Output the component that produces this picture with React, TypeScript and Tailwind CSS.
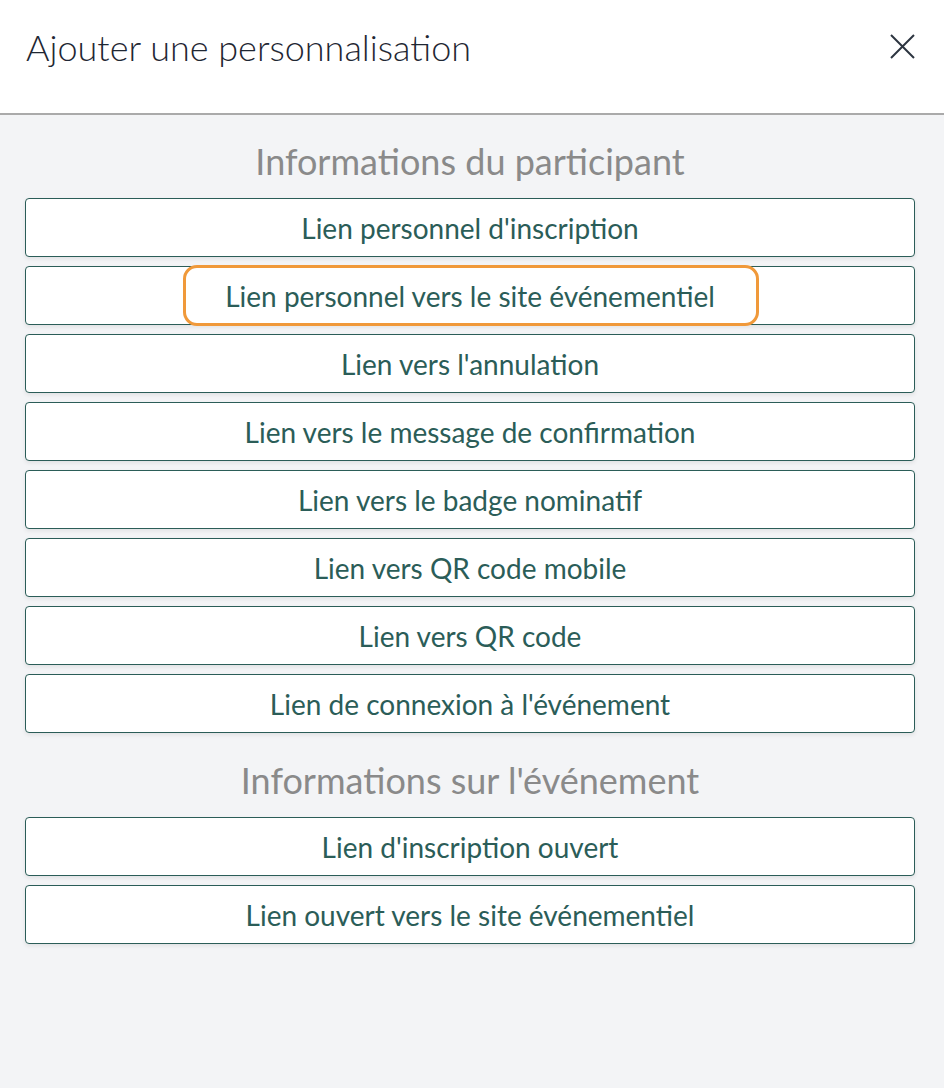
const participantLinks = [
  "Lien personnel d'inscription",
  'Lien personnel vers le site événementiel',
  "Lien vers l'annulation",
  'Lien vers le message de confirmation',
  'Lien vers le badge nominatif',
  'Lien vers QR code mobile',
  'Lien vers QR code',
  "Lien de connexion à l'événement",
];

const eventLinks = [
  "Lien d'inscription ouvert",
  'Lien ouvert vers le site événementiel',
];

function LinkButton({ label, highlighted }: { label: string; highlighted?: boolean }) {
  return (
    <button
      type="button"
      className="relative flex h-[59px] w-full items-center justify-center rounded-[4px] border border-[#2b5d58] bg-white text-[28px] leading-[32px] text-[#2b5d58] shadow-[0_2px_4px_rgba(0,0,0,0.08)]"
    >
      {highlighted && (
        // annotation ring drawn over the button
        <span className="pointer-events-none absolute left-[157px] top-[-2px] h-[61px] w-[576px] rounded-[14px] border-[3px] border-[#f0993a]" />
      )}
      <span className="relative">{label}</span>
    </button>
  );
}

function SectionTitle({ children }: { children: string }) {
  return (
    <h2 className="pb-[17px] text-center text-[36px] leading-[40px] text-[#8a8a8a]">{children}</h2>
  );
}

export default function App() {
  return (
    <div className="flex h-[1088px] w-[944px] flex-col bg-[#f3f4f6] font-['Lato','Noto_Sans',sans-serif]">
      <header className="flex h-[115px] shrink-0 items-center justify-between border-b-2 border-[#aaaaaa] bg-white pl-[26px] pr-[29px]">
        <h1 className="pb-[20px] text-[36px] font-light leading-[44px] text-[#1f2733]">
          Ajouter une personnalisation
        </h1>
        <button type="button" className="mb-[20px] text-[#2d3540]">
          <svg width="25" height="25" viewBox="0 0 25 25" fill="none" stroke="currentColor" strokeWidth="2">
            <path d="M1 1L24 24M24 1L1 24" />
          </svg>
        </button>
      </header>

      <div className="flex flex-col pl-[25px] pr-[29px] pt-[26px]">
        <SectionTitle>Informations du participant</SectionTitle>
        <div className="flex flex-col gap-[9px]">
          {participantLinks.map((l, i) => (
            <LinkButton key={l} label={l} highlighted={i === 1} />
          ))}
        </div>

        <div className="pt-[27px]">
          <SectionTitle>Informations sur l'événement</SectionTitle>
        </div>
        <div className="flex flex-col gap-[9px]">
          {eventLinks.map((l) => (
            <LinkButton key={l} label={l} />
          ))}
        </div>
      </div>
    </div>
  );
}
